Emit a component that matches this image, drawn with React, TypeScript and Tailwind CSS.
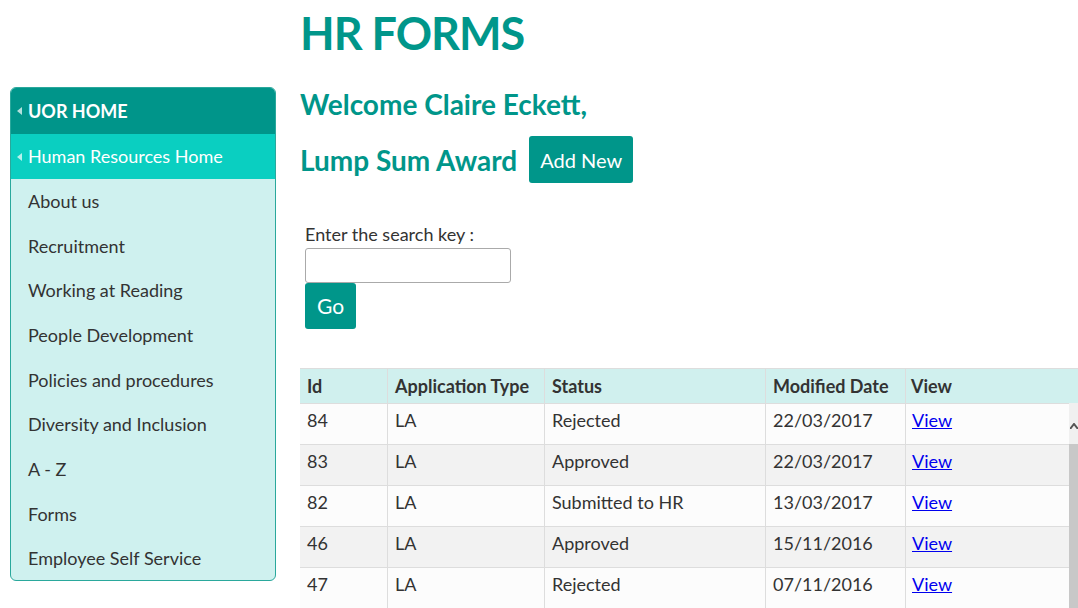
import React from "react";

const navItems = [
  "About us",
  "Recruitment",
  "Working at Reading",
  "People Development",
  "Policies and procedures",
  "Diversity and Inclusion",
  "A - Z",
  "Forms",
  "Employee Self Service",
];

const rows = [
  { id: "84", type: "LA", status: "Rejected", date: "22/03/2017" },
  { id: "83", type: "LA", status: "Approved", date: "22/03/2017" },
  { id: "82", type: "LA", status: "Submitted to HR", date: "13/03/2017" },
  { id: "46", type: "LA", status: "Approved", date: "15/11/2016" },
  { id: "47", type: "LA", status: "Rejected", date: "07/11/2016" },
];

const font = { fontFamily: "Lato, 'Open Sans', sans-serif" };

function Caret() {
  return (
    <span className="mr-[6px] inline-block h-0 w-0 border-y-[4px] border-r-[5px] border-y-transparent border-r-white/70" />
  );
}

export default function App() {
  return (
    <div
      className="flex h-[608px] w-[1078px] overflow-hidden bg-white text-[#333]"
      style={font}
    >
      {/* side navigation */}
      <aside className="ml-[10px] mt-[87px] h-[494px] w-[266px] shrink-0 overflow-hidden rounded-[6px] border border-[#2aa89c] bg-[#cff1ef]">
        <div className="flex h-[46px] items-center bg-[#00958a] pl-[6px] text-[18px] font-bold text-white">
          <Caret />
          UOR HOME
        </div>
        <div className="flex h-[45px] items-center bg-[#0acfc1] pl-[6px] text-[18px] text-white">
          <Caret />
          Human Resources Home
        </div>
        <ul>
          {navItems.map((t) => (
            <li
              key={t}
              className="flex h-[44.7px] items-center pl-[17px] text-[18px] text-[#333]"
            >
              {t}
            </li>
          ))}
        </ul>
      </aside>

      {/* main content */}
      <main className="ml-[24px] min-w-0 flex-1">
        <h1 className="mt-[7px] text-[45px] font-bold leading-[52px] tracking-[-1px] text-[#00968a]">
          HR FORMS
        </h1>
        <h2 className="mt-[29px] text-[28px] font-bold leading-[32px] text-[#00968a]">
          Welcome Claire Eckett,
        </h2>
        <div className="mt-[16px] flex items-center">
          <h2 className="text-[28px] font-bold leading-[32px] text-[#00968a]">
            Lump Sum Award
          </h2>
          <button className="ml-[12px] h-[47px] w-[104px] rounded-[3px] bg-[#00968a] text-[20px] text-white">
            Add New
          </button>
        </div>

        <div className="mt-[41px] pl-[5px]">
          <label className="block text-[18px] leading-[20px] text-[#333]">
            Enter the search key :
          </label>
          <input
            type="text"
            className="mt-[4px] block h-[35px] w-[206px] rounded-[3px] border border-[#aaa] bg-white"
          />
          <button className="block h-[46px] w-[51px] rounded-[3px] bg-[#00968a] text-[21px] text-white">
            Go
          </button>
        </div>

        {/* results */}
        <div className="mt-[39px] w-[778px] border-t border-[#ddd] text-[18px]">
          <div className="grid h-[34px] grid-cols-[88px_157px_221px_140px_1fr] bg-[#d0f0ee] font-bold text-[#333]">
            <div className="flex items-center border-r border-[#ddd] pl-[7px]">Id</div>
            <div className="flex items-center border-r border-[#ddd] pl-[7px]">Application Type</div>
            <div className="flex items-center border-r border-[#ddd] pl-[7px]">Status</div>
            <div className="flex items-center border-r border-[#ddd] pl-[7px]">Modified Date</div>
            <div className="flex items-center pl-[5px]">View</div>
          </div>
          <div className="flex">
            <div className="flex-1">
              {rows.map((r, i) => (
                <div
                  key={r.id}
                  className={`grid h-[41px] grid-cols-[88px_157px_221px_140px_1fr] border-t border-[#ddd] leading-[24px] ${
                    i % 2 === 0 ? "bg-[#fcfcfc]" : "bg-[#f2f2f2]"
                  }`}
                >
                  <div className="border-r border-[#ddd] pl-[7px] pt-[4px]">{r.id}</div>
                  <div className="border-r border-[#ddd] pl-[7px] pt-[4px]">{r.type}</div>
                  <div className="border-r border-[#ddd] pl-[7px] pt-[4px]">{r.status}</div>
                  <div className="border-r border-[#ddd] pl-[7px] pt-[4px]">{r.date}</div>
                  <div className="pl-[6px] pt-[4px]">
                    <a href="#" className="text-[#0000ee] underline">
                      View
                    </a>
                  </div>
                </div>
              ))}
            </div>
            {/* scroll track */}
            <div className="flex w-[9px] flex-col">
              <div className="flex h-[41px] items-center justify-center bg-[#f0f0f0] pt-[4px]">
                <svg width="8" height="6" viewBox="0 0 8 6">
                  <path d="M0 6 L4 1 L8 6" fill="none" stroke="#555" strokeWidth="2" />
                </svg>
              </div>
              <div className="flex-1 bg-[#c8c8c8]" />
            </div>
          </div>
        </div>
      </main>
    </div>
  );
}
